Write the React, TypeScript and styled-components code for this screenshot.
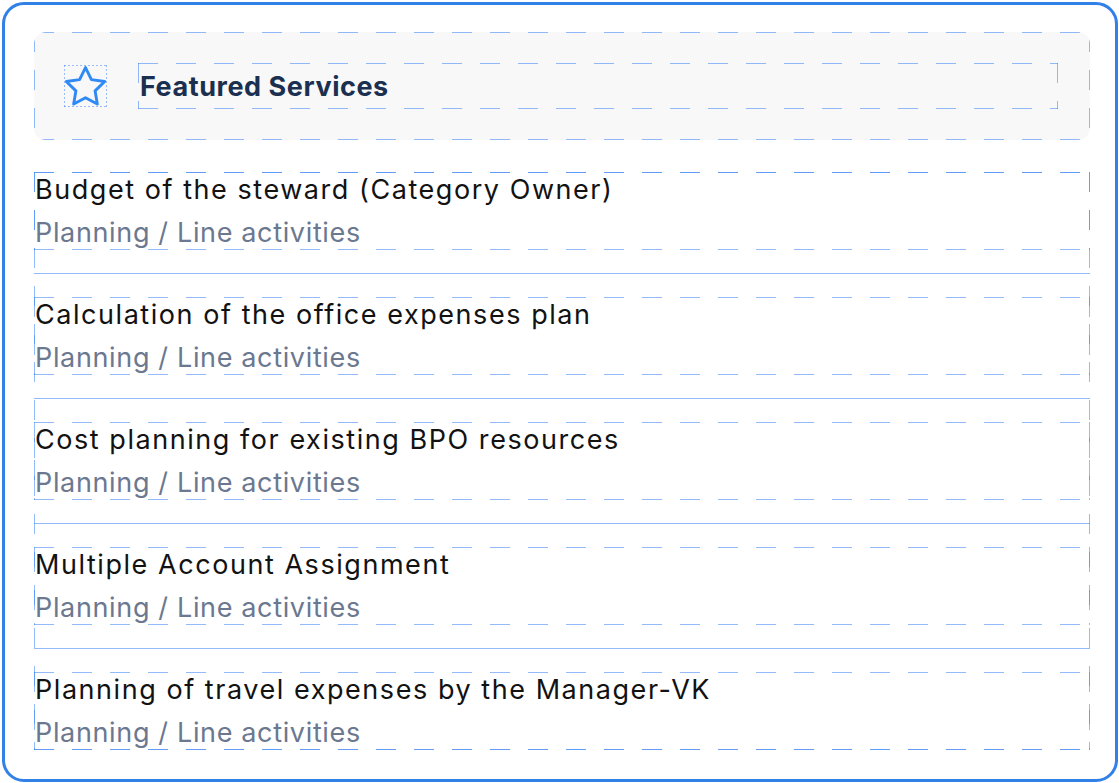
import styled, { createGlobalStyle, css } from 'styled-components'

const GlobalStyle = createGlobalStyle`
  html, body {
    margin: 0;
    padding: 0;
    background: #ffffff;
  }
  body {
    font-family: Inter, 'Noto Sans', 'Liberation Sans', sans-serif;
  }
`

const GUIDE = 'rgba(59, 130, 246, 0.55)'

// figma-like dashed guide, drawn as backgrounds so the dashes are long
const dashed = (c: string, on = 20, period = 38) => css`
  background-image:
    repeating-linear-gradient(90deg, ${c} 0 ${on}px, transparent ${on}px ${period}px),
    repeating-linear-gradient(90deg, ${c} 0 ${on}px, transparent ${on}px ${period}px),
    repeating-linear-gradient(180deg, ${c} 0 ${on}px, transparent ${on}px ${period}px),
    repeating-linear-gradient(180deg, ${c} 0 ${on}px, transparent ${on}px ${period}px);
  background-size: 100% 1px, 100% 1px, 1px 100%, 1px 100%;
  background-position: 0 0, 0 100%, 0 0, 100% 0;
  background-repeat: no-repeat;
`

const Page = styled.div`
  padding: 2px 1px 1px 2px;
`

const Card = styled.section`
  border: 3px solid #3181e8;
  border-radius: 22px;
  padding: 27px 25px 29px 29px;
  background: #ffffff;
`

const Header = styled.header`
  ${dashed(GUIDE)};
  background-color: #f8f8f8;
  border-radius: 12px;
  display: flex;
  align-items: center;
  gap: 31px;
  padding: 31px 32px 31px 30px;
`

const IconBox = styled.div`
  ${dashed('rgba(59, 130, 246, 0.5)', 2, 4)};
  width: 43px;
  height: 42px;
  flex-shrink: 0;
  display: flex;
  align-items: center;
  justify-content: center;
`

const TitleBox = styled.div`
  ${dashed(GUIDE)};
  flex: 1;
  height: 46px;
  display: flex;
  align-items: center;
  padding-left: 2px;
`

const Title = styled.h2`
  margin: 0;
  font-size: 27px;
  font-weight: 700;
  color: #1b3050;
  letter-spacing: 0.55px;
`

const List = styled.ul`
  ${dashed(GUIDE)};
  list-style: none;
  margin: 32px 0 0;
  padding: 0;
`

const Item = styled.li<{ $first?: boolean; $last?: boolean }>`
  padding: ${(p) => (p.$first ? 0 : 23)}px 0 ${(p) => (p.$last ? 0 : 23)}px;
  border-top: ${(p) => (p.$first ? 'none' : '1px solid rgba(59, 130, 246, 0.55)')};
`

const TextBlock = styled.div`
  ${dashed(GUIDE)};
  height: 78px;
  padding-left: 1px;
  box-sizing: border-box;
`

const ItemTitle = styled.div`
  font-size: 27px;
  line-height: 36px;
  color: #121212;
  letter-spacing: 1.55px;
`

const ItemPath = styled.div`
  margin-top: 8px;
  font-size: 27px;
  line-height: 34px;
  color: #6b7890;
  letter-spacing: 0.65px;
`

const StarIcon = () => (
  <svg width="43" height="42" viewBox="0.9 1 22.2 21.4" fill="none">
    <polygon
      points="12,2.2 15.05,8.4 21.9,9.4 16.95,14.2 18.1,21 12,17.8 5.9,21 7.05,14.2 2.1,9.4 8.95,8.4"
      stroke="#2f8af5"
      strokeWidth="1.5"
      strokeLinejoin="round"
    />
  </svg>
)

const services = [
  'Budget of the steward (Category Owner)',
  'Calculation of the office expenses plan',
  'Cost planning for existing BPO resources',
  'Multiple Account Assignment',
  'Planning of travel expenses by the Manager-VK',
]

export default function App() {
  return (
    <Page>
      <GlobalStyle />
      <Card>
        <Header>
          <IconBox>
            <StarIcon />
          </IconBox>
          <TitleBox>
            <Title>Featured Services</Title>
          </TitleBox>
        </Header>
        <List>
          {services.map((s, i) => (
            <Item key={s} $first={i === 0} $last={i === services.length - 1}>
              <TextBlock>
                <ItemTitle>{s}</ItemTitle>
                <ItemPath>Planning / Line activities</ItemPath>
              </TextBlock>
            </Item>
          ))}
        </List>
      </Card>
    </Page>
  )
}
